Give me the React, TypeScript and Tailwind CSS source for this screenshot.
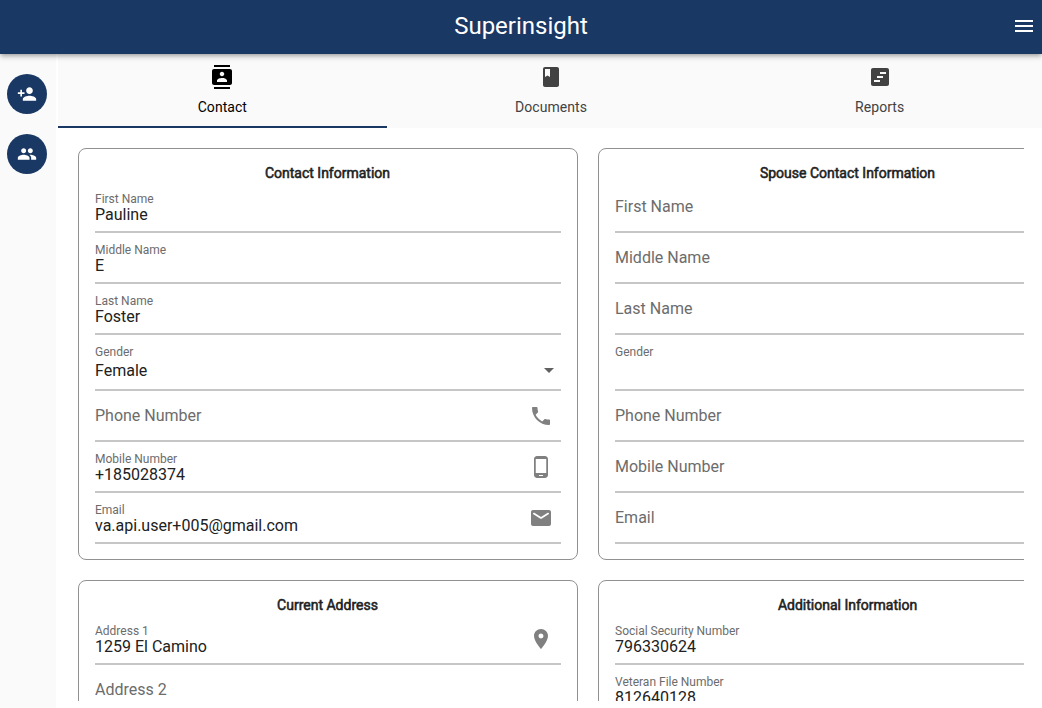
import type { ComponentType, ReactNode } from "react";
import {
  MdArrowDropDown,
  MdBook,
  MdContacts,
  MdMenu,
  MdPeople,
  MdPersonAdd,
  MdPhone,
  MdPhoneAndroid,
  MdPlace,
} from "react-icons/md";

type Icon = ComponentType<{ className?: string }>;

function ReportIcon({ className }: { className?: string }) {
  return (
    <svg viewBox="0 0 24 24" fill="currentColor" className={className}>
      <path
        fillRule="evenodd"
        d="M19 3H5c-1.1 0-2 .9-2 2v14c0 1.1.9 2 2 2h14c1.1 0 2-.9 2-2V5c0-1.1-.9-2-2-2zM12 17H6v-2h6v2zM15 13H9v-2h6v2zM18 9h-6V7h6v2z"
      />
    </svg>
  );
}

function MailIcon({ className }: { className?: string }) {
  return (
    <svg viewBox="0 0 24 24" fill="currentColor" className={className}>
      <path d="M20 4H4c-1.1 0-2 .9-2 2v12c0 1.1.9 2 2 2h16c1.1 0 2-.9 2-2V6c0-1.1-.9-2-2-2zm-.4 4.25l-7.07 4.42c-.32.2-.74.2-1.06 0L4.4 8.25c-.25-.16-.4-.43-.4-.72 0-.67.73-1.07 1.3-.72L12 11l6.7-4.19c.57-.35 1.3.05 1.3.72 0 .29-.15.56-.4.72z" />
    </svg>
  );
}

function Tab({ icon: I, label, active }: { icon: Icon; label: string; active?: boolean }) {
  return (
    <div
      className={`flex h-full flex-1 flex-col items-center border-b-2 pt-[11px] ${
        active ? "border-[#1a3864] text-black" : "border-transparent text-[#424242]"
      }`}
    >
      <I className="size-6" />
      <span className="mt-2 text-sm leading-5 tracking-[0.05px]">{label}</span>
    </div>
  );
}

function RailButton({ icon: I }: { icon: Icon }) {
  return (
    <button className="flex size-10 items-center justify-center rounded-full bg-[#1a3864] text-white">
      <I className="size-5" />
    </button>
  );
}

type FieldProps = { label: string; value?: string; icon?: Icon; select?: boolean };

function Field({ label, value, icon: I, select }: FieldProps) {
  const floating = value !== undefined;
  return (
    <div
      className={`flex items-start justify-between border-b-2 border-[#c6c6c6] ${
        select ? "h-14" : "h-[51px]"
      }`}
    >
      {floating ? (
        <div className="flex flex-col pt-2.5">
          <span className="text-xs leading-[14px] text-[#6c6c6c]">{label}</span>
          <span
            className={`h-[19px] text-base leading-[19px] text-[#212121] ${select ? "mt-0.5" : "-mt-px"}`}
          >
            {value}
          </span>
        </div>
      ) : (
        <span className="pt-[15px] text-base leading-[19px] text-[#6c6c6c]">{label}</span>
      )}
      {select && value && <MdArrowDropDown className="mt-[23px] size-6 text-[#616161]" />}
      {I && <I className="mt-[13px] mr-2 size-6 text-[#808080]" />}
    </div>
  );
}

function Card({ title, children }: { title: string; children: ReactNode }) {
  return (
    <section className="h-[412px] w-[500px] shrink-0 rounded-[8px] border border-[#919191] px-4 pt-4">
      <h2 className="mb-px pr-px text-center text-sm leading-4 font-normal text-[#212121] [-webkit-text-stroke:0.55px_#212121]">
        {title}
      </h2>
      {children}
    </section>
  );
}

export default function App() {
  return (
    <div className="flex h-[708px] w-[1042px] flex-col overflow-hidden bg-white font-[Roboto,sans-serif]">
      <header className="z-10 grid h-[54px] shrink-0 grid-cols-[1fr_auto_1fr] items-center bg-[#1a3864] pr-1.5 pl-1.5 text-white shadow-[0_2px_4px_-1px_rgba(0,0,0,0.3),0_4px_5px_rgba(0,0,0,0.12)]">
        <span />
        <h1 className="pb-[3px] text-2xl leading-7">Superinsight</h1>
        <MdMenu className="mb-0.5 size-6 justify-self-end" />
      </header>
      <div className="flex min-h-0 flex-1">
        <aside className="mr-0.5 flex w-14 shrink-0 flex-col gap-5 bg-[#fafafa] pt-5 pl-[7px]">
          <RailButton icon={MdPersonAdd} />
          <RailButton icon={MdPeople} />
        </aside>
        <div className="flex min-w-0 flex-1 flex-col">
          <nav className="-mr-0.5 flex h-[74px] shrink-0 bg-[#fafafa]">
            <Tab icon={MdContacts} label="Contact" active />
            <Tab icon={MdBook} label="Documents" />
            <Tab icon={ReportIcon} label="Reports" />
          </nav>
          <main className="mr-[18px] mb-[7px] ml-5 grid min-h-0 flex-1 grid-cols-[500px_500px] content-start gap-5 overflow-hidden pt-5">
            <Card title="Contact Information">
              <Field label="First Name" value="Pauline" />
              <Field label="Middle Name" value="E" />
              <Field label="Last Name" value="Foster" />
              <Field label="Gender" value="Female" select />
              <Field label="Phone Number" icon={MdPhone} />
              <Field label="Mobile Number" value="+185028374" icon={MdPhoneAndroid} />
              <Field label="Email" value="va.api.user+005@gmail.com" icon={MailIcon} />
            </Card>
            <Card title="Spouse Contact Information">
              <Field label="First Name" />
              <Field label="Middle Name" />
              <Field label="Last Name" />
              <Field label="Gender" value="" select />
              <Field label="Phone Number" />
              <Field label="Mobile Number" />
              <Field label="Email" />
            </Card>
            <Card title="Current Address">
              <Field label="Address 1" value="1259 El Camino" icon={MdPlace} />
              <Field label="Address 2" />
            </Card>
            <Card title="Additional Information">
              <Field label="Social Security Number" value="796330624" />
              <Field label="Veteran File Number" value="812640128" />
            </Card>
          </main>
        </div>
      </div>
    </div>
  );
}
